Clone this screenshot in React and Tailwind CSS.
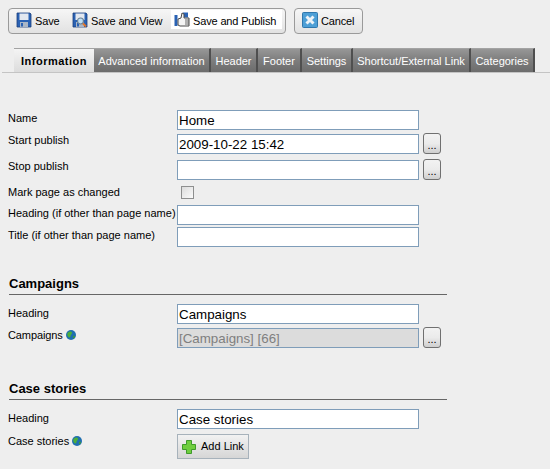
import React from "react";

const Floppy = ({ badge }) => (
  <svg width="16" height="16" viewBox="0 0 16 16" className="shrink-0">
    <path d="M1 1h13l1 1v13H1z" fill="#2a62b4" stroke="#1c3f7c" strokeWidth="0.8" />
    <rect x="3.500" y="1.500" width="9" height="6.500" fill="#e3e8f0" />
    <rect x="4" y="10" width="8" height="5" fill="#aab6c6" />
    <rect x="5" y="11" width="2" height="3.500" fill="#2a62b4" />
    {badge && (
      <>
        <circle cx="8.500" cy="9" r="3" fill="#bfe0f6" stroke="#6b8096" strokeWidth="1.200" />
        <path d="M11 11.500l3 3" stroke="#e0752a" strokeWidth="2" />
      </>
    )}
  </svg>
);

const Thumb = () => (
  <svg width="16" height="16" viewBox="0 0 16 16" className="shrink-0">
    <rect x="0.500" y="3" width="3" height="11" fill="#2a62b4" />
    <path d="M9 0.500h5v5h-5z" fill="#2a62b4" />
    <path d="M4 7l3-1 1-5 2 1v4h5v8H6l-2-1z" fill="#f4f4f4" stroke="#4a4a4a" strokeWidth="1" />
    <path d="M11 8h4M11 10h4M11 12h4" stroke="#4a4a4a" strokeWidth="0.800" />
  </svg>
);

const CancelIcon = () => (
  <svg width="16" height="16" viewBox="0 0 16 16" className="shrink-0">
    <rect x="0.500" y="0.500" width="15" height="15" rx="1" fill="#4d9fd6" stroke="#2f77ad" />
    <path d="M4.500 4.500l7 7M11.500 4.500l-7 7" stroke="#eef3f7" strokeWidth="3" />
  </svg>
);

const Globe = () => (
  <svg width="10" height="10" viewBox="0 0 10 10" className="shrink-0">
    <circle cx="5" cy="5" r="5" fill="#1f6fb0" />
    <path d="M2 2.500c1.500-1.500 3.500-1 4 0 .5 1.500-1.500 2-1.500 3.500S3 8 2 6.500 1 3.500 2 2.500z" fill="#4caf3a" />
    <path d="M7 6c1-.5 2-.5 2 .5S8 8.500 7 8z" fill="#3c9a3a" />
  </svg>
);

const PlusIcon = () => (
  <svg width="14" height="14" viewBox="0 0 14 14" className="shrink-0">
    <path d="M4.500.5h5v4h4v5h-4v4h-5v-4h-4v-5h4z" fill="#6fce3f" stroke="#3f9a2b" strokeLinejoin="round" />
  </svg>
);

const Browse = () => (
  <button className="ml-1 w-[18px] h-[21px] -mt-px shrink-0 flex items-end justify-center rounded-[3px] border border-[#707070] bg-gradient-to-b from-[#f2f2f2] via-[#ebebeb] to-[#cfcfcf] text-[11px] leading-[15px] text-black">
    ...
  </button>
);

// labelClass nudges the caption, the rows are not all aligned the same way
const Field = ({ label, value, disabled, browse, globe, className, labelClass = "pt-px" }) => (
  <div className={`flex items-start ${className || ""}`}>
    <div className={`w-[177px] pl-2 flex items-center gap-[3px] text-[11px] leading-[14px] whitespace-nowrap text-black ${labelClass}`}>
      {label}
      {globe && <Globe />}
    </div>
    <input
      readOnly
      value={value || ""}
      className={`w-[242px] h-5 border border-[#7f9db9] px-[1px] text-[13.33px] outline-none ${
        disabled ? "bg-[#dcdcdc] text-[#7f7f7f]" : "bg-white text-black"
      }`}
    />
    {browse && <Browse />}
  </div>
);

const Tab = ({ active, width, children }) => (
  <div
    className={`h-6 pt-px flex items-center justify-center text-[11px] whitespace-nowrap border-t border-[#a3a3a3] ${width} ${
      active
        ? "bg-gradient-to-b from-[#f4f4f4] to-[#dcdcdc] font-bold tracking-[0.5px] text-black"
        : "bg-gradient-to-b from-[#979797] via-[#7d7d7d] to-[#6c6c6c] text-white border-r-2 border-r-[#4f4f4f]"
    }`}
  >
    {children}
  </div>
);

const Section = ({ title, className }) => (
  <h2 className={`ml-[9px] w-[438px] h-[18px] border-b border-[#666666] text-[13px] font-bold leading-[14px] text-black ${className}`}>
    {title}
  </h2>
);

const ToolItem = ({ icon, children, hot, width }) => (
  <div className={`h-[19px] mt-px flex items-center gap-[3px] pl-[3px] text-[11px] tracking-[-0.15px] ${width} ${hot ? "bg-white" : ""}`}>
    {icon}
    <span className="pt-1">{children}</span>
  </div>
);

export default function App() {
  return (
    <div className="w-[550px] h-[469px] overflow-hidden bg-[#eeeeee] text-black font-['Liberation_Sans',sans-serif]">
      {/* toolbar */}
      <div className="flex gap-2 pl-2 pt-2">
        <div className="w-[278px] h-[26px] flex items-start pl-[4px] rounded-[4px] border border-[#9a9a9a] bg-gradient-to-b from-[#f6f6f6] to-[#e2e2e2]">
          <ToolItem icon={<Floppy />} width="w-[56px]">Save</ToolItem>
          <ToolItem icon={<Floppy badge />} width="w-[102px]">Save and View</ToolItem>
          <ToolItem icon={<Thumb />} hot width="w-[111px]">Save and Publish</ToolItem>
        </div>
        <div className="w-[69px] h-[26px] flex items-start pl-[4px] rounded-[4px] border border-[#9a9a9a] bg-gradient-to-b from-[#f6f6f6] to-[#e2e2e2]">
          <ToolItem icon={<CancelIcon />} width="w-[60px]">Cancel</ToolItem>
        </div>
      </div>

      {/* tabs */}
      <div className="mt-[14px] ml-[2px] pl-3 flex border-b border-[#c4c4c4]">
        <Tab active width="w-[80px]">Information</Tab>
        <Tab width="w-[117px]">Advanced information</Tab>
        <Tab width="w-[47px]">Header</Tab>
        <Tab width="w-[44px]">Footer</Tab>
        <Tab width="w-[51px]">Settings</Tab>
        <Tab width="w-[118px]">Shortcut/External Link</Tab>
        <Tab width="w-[64px]">Categories</Tab>
      </div>

      {/* form */}
      <div className="mt-[37px]">
        <Field label="Name" value="Home" />
        <Field label="Start publish" value="2009-10-22 15:42" browse className="mt-1" labelClass="-mt-px" />
        <Field label="Stop publish" browse className="mt-[6px]" labelClass="-mt-px" />
        <div className="flex items-center h-5 mt-[2px]">
          <div className="w-[181px] pl-2 text-[11px] whitespace-nowrap">Mark page as changed</div>
          <span className="mt-px w-[13px] h-[13px] border border-[#8e8f8f] bg-gradient-to-br from-[#dcdcdc] to-[#fbfbfb]" />
        </div>
        <Field label="Heading (if other than page name)" className="mt-[3px]" />
        <Field label="Title (if other than page name)" className="mt-[2px]" />
      </div>

      <Section title="Campaigns" className="mt-[30px]" />
      <Field label="Heading" value="Campaigns" className="mt-[9px]" labelClass="pt-[2px]" />
      <Field label="Campaigns" value="[Campaigns] [66]" disabled browse globe className="mt-1" labelClass="tracking-[-0.1px]" />

      <Section title="Case stories" className="mt-[34px]" />
      <Field label="Heading" value="Case stories" className="mt-[9px]" labelClass="pt-[2px]" />
      <div className="flex items-start mt-[5px]">
        <div className="w-[177px] pl-2 flex items-center gap-[3px] text-[11px] leading-[14px]">
          Case stories
          <Globe />
        </div>
        <button className="w-[72px] h-[25px] flex items-center gap-[5px] pl-[4px] border border-[#a7b2bb] bg-gradient-to-b from-[#f2f2f2] to-[#d6d6d6] text-[11px]">
          <PlusIcon />
          Add Link
        </button>
      </div>
    </div>
  );
}
